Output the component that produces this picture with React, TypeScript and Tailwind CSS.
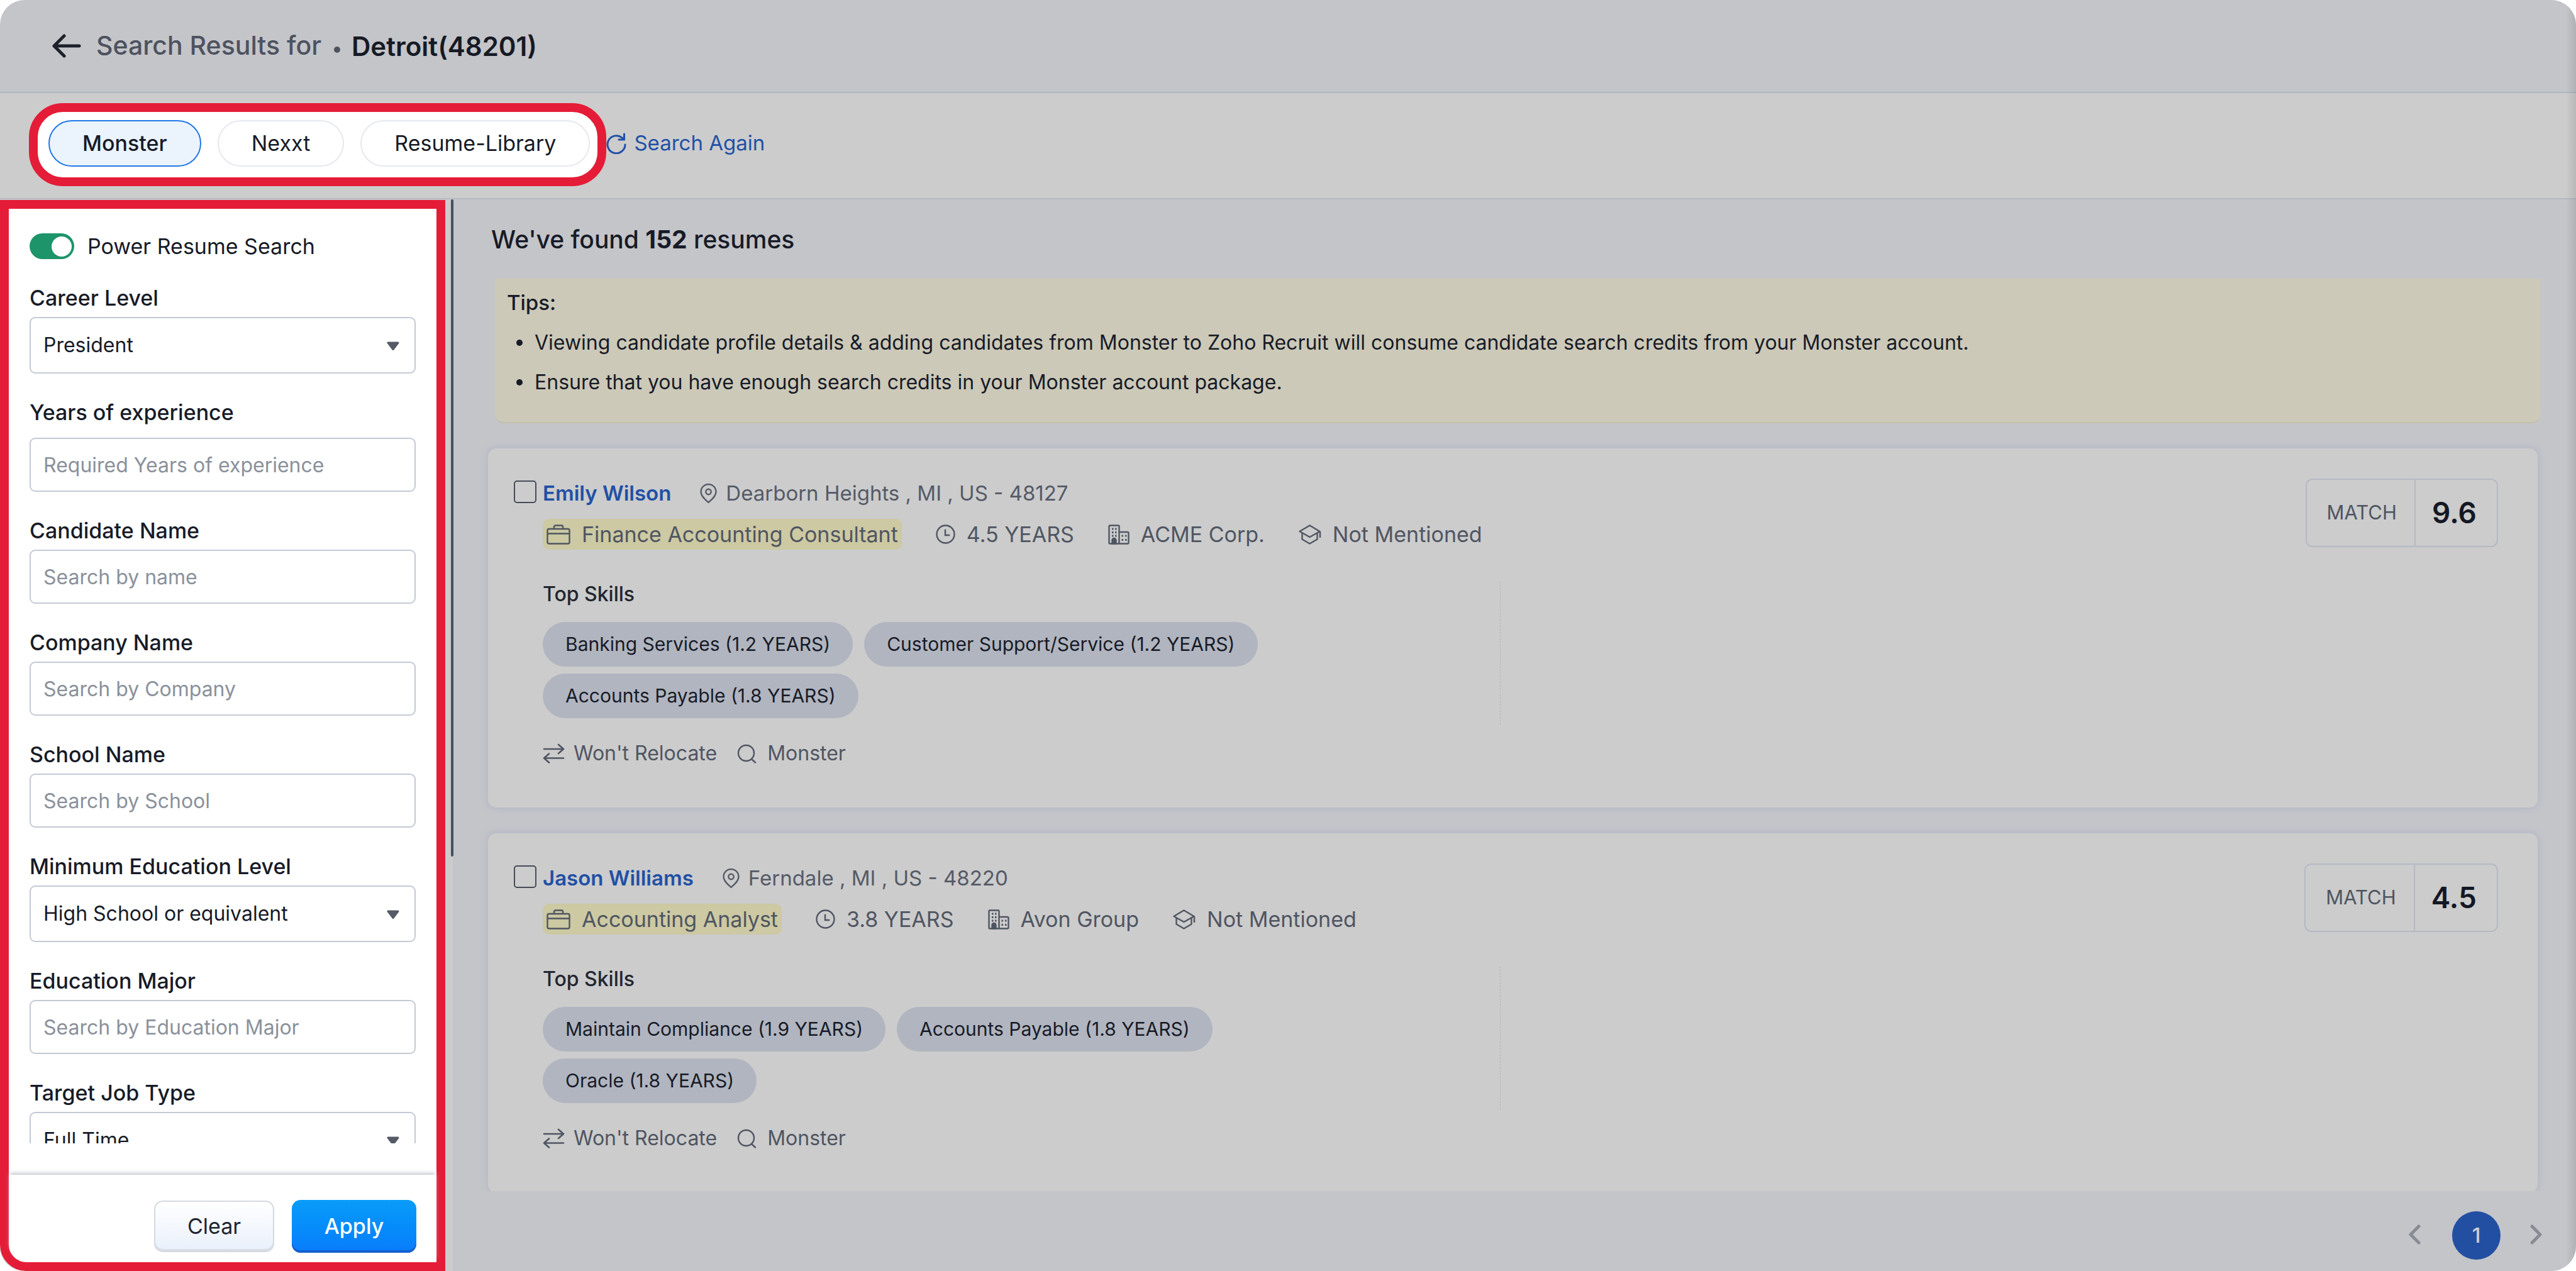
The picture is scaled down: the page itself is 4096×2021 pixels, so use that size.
import type { ReactNode } from "react";

type Candidate = {
  name: string;
  location: string;
  title: string;
  years: string;
  company: string;
  education: string;
  skills: string[];
  score: string;
};

const candidates: Candidate[] = [
  {
    name: "Emily Wilson",
    location: "Dearborn Heights , MI , US - 48127",
    title: "Finance Accounting Consultant",
    years: "4.5 YEARS",
    company: "ACME Corp.",
    education: "Not Mentioned",
    skills: [
      "Banking Services (1.2 YEARS)",
      "Customer Support/Service (1.2 YEARS)",
      "Accounts Payable (1.8 YEARS)",
    ],
    score: "9.6",
  },
  {
    name: "Jason Williams",
    location: "Ferndale , MI , US - 48220",
    title: "Accounting Analyst",
    years: "3.8 YEARS",
    company: "Avon Group",
    education: "Not Mentioned",
    skills: [
      "Maintain Compliance (1.9 YEARS)",
      "Accounts Payable (1.8 YEARS)",
      "Oracle (1.8 YEARS)",
    ],
    score: "4.5",
  },
];

function ArrowBackIcon() {
  return (
    <svg className="h-[38px] w-[46px]" viewBox="0 0 46 38" fill="none" stroke="currentColor" strokeWidth="5" strokeLinecap="round" strokeLinejoin="round">
      <path d="M43 19H3M19 3 3 19l16 16" />
    </svg>
  );
}

function RefreshIcon() {
  return (
    <svg className="h-[34px] w-[32px]" viewBox="0 0 32 34" fill="none" stroke="currentColor" strokeWidth="3" strokeLinecap="round" strokeLinejoin="round">
      <path d="M30 19A14 14 0 1 1 24.5 7.6L28 10.5" />
      <path d="M28.5 2v9H20" />
    </svg>
  );
}

function PinIcon() {
  return (
    <svg className="h-8 w-[27px]" viewBox="0 0 27 32" fill="none" stroke="currentColor" strokeWidth="2.4" strokeLinejoin="round">
      <path d="M13.5 30C9 25.5 1.5 20.5 1.5 13a12 12 0 0 1 24 0c0 7.5-7.5 12.5-12 17Z" />
      <circle cx="13.5" cy="13" r="4.2" />
    </svg>
  );
}

function BriefcaseIcon() {
  return (
    <svg className="h-8 w-[38px]" viewBox="0 0 38 32" fill="none" stroke="currentColor" strokeWidth="2.4" strokeLinejoin="round">
      <rect x="1.5" y="7" width="35" height="23.5" rx="2.5" />
      <path d="M12 7V3.5A2 2 0 0 1 14 1.5h10a2 2 0 0 1 2 2V7M1.5 14.5h35" />
    </svg>
  );
}

function ClockIcon() {
  return (
    <svg className="h-[31px] w-[31px]" viewBox="0 0 31 31" fill="none" stroke="currentColor" strokeWidth="2.4" strokeLinecap="square">
      <circle cx="15.5" cy="15.5" r="14" />
      <path d="M15 9v8h6" />
    </svg>
  );
}

function BuildingIcon() {
  return (
    <svg className="h-8 w-[34px]" viewBox="0 0 34 32" fill="none" stroke="currentColor" strokeWidth="2.4" strokeLinejoin="round">
      <path d="M17.5 30.5H3A1.5 1.5 0 0 1 1.5 29V3A1.5 1.5 0 0 1 3 1.5h13A1.5 1.5 0 0 1 17.5 3v27.5H31a1.5 1.5 0 0 0 1.5-1.5V13.5A1.5 1.5 0 0 0 31 12H17.5" />
      <path d="M6 7h2.5M11 7h2.5M6 12.5h2.5M11 12.5h2.5M6 18h2.5M11 18h2.5M21.5 18h2.5M27 18h2.5M21.5 24.5h2.5M27 24.5h2.5" strokeWidth="3.2" />
      <path d="M6.5 30.5V25a3 3 0 0 1 6 0v5.5Z" fill="currentColor" />
    </svg>
  );
}

function GraduationIcon() {
  return (
    <svg className="h-8 w-[36px]" viewBox="0 0 36 32" fill="none" stroke="currentColor" strokeWidth="2.4" strokeLinejoin="round">
      <path d="M17.5 1.5 33.5 11 17.5 20 1.5 11Z" />
      <path d="M5.5 13.5v10l12 7 12-7v-10M34 11v10" />
    </svg>
  );
}

function SwapIcon() {
  return (
    <svg className="h-8 w-[35px]" viewBox="0 0 35 32" fill="none" stroke="currentColor" strokeWidth="2.6" strokeLinecap="round" strokeLinejoin="round">
      <path d="M2 9h31M25 2l8 7-8 7M33 23.5H2M10 16.5l-8 7 8 7" />
    </svg>
  );
}

function SearchIcon() {
  return (
    <svg className="h-[31px] w-[31px]" viewBox="0 0 31 31" fill="none" stroke="currentColor" strokeWidth="2.4" strokeLinecap="round">
      <circle cx="14.5" cy="14.5" r="12.5" />
      <path d="m23 24 6 5.5" />
    </svg>
  );
}

function SourceTab({ label, active = false }: { label: string; active?: boolean }) {
  return (
    <button
      type="button"
      role="tab"
      aria-selected={active}
      className={
        active
          ? "h-[74px] rounded-full border-2 border-[#1f78e6] bg-[#ebf3fc] px-[52px] text-[34px] font-medium text-[#171b27]"
          : "h-[74px] rounded-full border-2 border-[#e5e8ef] bg-white px-[52px] text-[34px] text-[#171b27]"
      }
    >
      {label}
    </button>
  );
}

function FieldLabel({ id, children }: { id: string; children: ReactNode }) {
  return (
    <label htmlFor={id} className="block text-[34px] leading-[40px] font-medium text-[#171b27]">
      {children}
    </label>
  );
}

function TextField({ id, label, placeholder, gap = "mt-[10px]" }: { id: string; label: string; placeholder: string; gap?: string }) {
  return (
    <div>
      <FieldLabel id={id}>{label}</FieldLabel>
      <input
        id={id}
        type="text"
        placeholder={placeholder}
        className={`${gap} block h-[86px] w-full rounded-[9px] border-2 border-[#c3cad6] bg-white px-5 text-[32px] text-[#171b27] placeholder:text-[#8a919b]`}
      />
    </div>
  );
}

function SelectField({ id, label, value }: { id: string; label: string; value: string }) {
  return (
    <div>
      <FieldLabel id={id}>{label}</FieldLabel>
      <div className="relative mt-[10px]">
        <select
          id={id}
          defaultValue={value}
          className="block h-[90px] w-full appearance-none rounded-[9px] border-2 border-[#c3cad6] bg-white px-5 text-[32px] text-[#171b27]"
        >
          <option>{value}</option>
        </select>
        <svg className="pointer-events-none absolute top-[39px] right-[26px] h-[15px] w-5" viewBox="0 0 20 15" fill="#555a66" stroke="#555a66" strokeWidth="3" strokeLinejoin="round">
          <path d="M2 2h16l-8 10.5Z" />
        </svg>
      </div>
    </div>
  );
}

function CandidateCard({ candidate }: { candidate: Candidate }) {
  const checkId = `select-${candidate.name.replace(" ", "-").toLowerCase()}`;
  return (
    <article className="flex shrink-0 items-start rounded-[13px] bg-[#cccccc] pt-12 pr-[63px] pb-[66px] pl-[41px] shadow-[0_0_10px_3px_#b6bac6]">
      <input
        id={checkId}
        type="checkbox"
        aria-label={`Select ${candidate.name}`}
        className="mt-[3px] size-[36px] shrink-0 appearance-none rounded-[5px] border-2 border-[#454b58]"
      />
      <div className="ml-[10px] min-w-0 flex-1">
        <div className="flex items-start justify-between">
          <div>
            <div className="flex h-12 items-center">
              <a href="#profile" className="text-[33px] font-semibold text-[#2150a6]">
                {candidate.name}
              </a>
              <span className="ml-[46px] flex items-center gap-[14px] text-[33px] text-[#555a67]">
                <PinIcon />
                {candidate.location}
              </span>
            </div>
            <div className="mt-4 flex h-[49px] items-center gap-[54px] text-[34px] text-[#4f5562]">
              <span className="flex h-full items-center gap-[18px] rounded-[10px] bg-[#ccc9a3] px-[6px]">
                <BriefcaseIcon />
                {candidate.title}
              </span>
              <span className="flex items-center gap-[18px]">
                <ClockIcon />
                {candidate.years}
              </span>
              <span className="flex items-center gap-[18px]">
                <BuildingIcon />
                {candidate.company}
              </span>
              <span className="flex items-center gap-[18px]">
                <GraduationIcon />
                {candidate.education}
              </span>
            </div>
          </div>
          <div className="flex h-[109px] items-stretch rounded-[11px] border-2 border-[#b5b9c5]">
            <span className="flex items-center pr-7 pl-8 text-[31px] text-[#4f5562]">MATCH</span>
            <span className="flex items-center border-l-2 border-[#b5b9c5] pr-8 pl-[26px] text-[46px] font-semibold text-[#141824]">
              {candidate.score}
            </span>
          </div>
        </div>

        <div className="mt-[51px] w-[49%] border-r border-dashed border-[#b3b5ba] pr-[120px] pb-[10px]">
          <h3 className="text-[32px] leading-[40px] font-medium text-[#21252f]">Top Skills</h3>
          <ul className="mt-6 flex flex-wrap gap-x-[18px] gap-y-[11px]">
            {candidate.skills.map((skill) => (
              <li key={skill} className="flex h-[71px] items-center rounded-full bg-[#b1b5c0] px-9 text-[30px] text-[#171b27]">
                {skill}
              </li>
            ))}
          </ul>
        </div>

        <div className="mt-[26px] flex h-10 items-center text-[32px] text-[#4f5562]">
          <SwapIcon />
          <span className="ml-[14px]">Won't Relocate</span>
          <span className="ml-[32px] flex items-center gap-[17px]">
            <SearchIcon />
            Monster
          </span>
        </div>
      </div>
    </article>
  );
}

export default function App() {
  return (
    <div className="h-screen bg-white font-['Inter',sans-serif]">
      <div className="relative flex h-full flex-col overflow-hidden rounded-[39px] bg-[#c4c5c9]">
        <header className="flex h-[148px] shrink-0 items-center border-b-2 border-[#b2b6c2] pl-[83px]">
          <button type="button" aria-label="Back" className="text-[#1c202b]">
            <ArrowBackIcon />
          </button>
          <h1 className="ml-6 flex items-center text-[41px] font-medium text-[#4d525f]">
            Search Results for
            <span className="mt-3 ml-5 size-[10px] rounded-full bg-[#4d525f]" />
            <span className="ml-[18px] text-[42px] font-semibold text-[#161a25]">Detroit(48201)</span>
          </h1>
        </header>

        <div className="flex h-[169px] shrink-0 items-center border-b-2 border-[#b5b9c4] bg-[#cccccc] pb-1 pl-[46px]">
          <div role="tablist" aria-label="Sources" className="flex h-[132px] items-center gap-[26px] rounded-[54px] border-[14px] border-[#e51c37] bg-white pr-3 pb-1 pl-[17px]">
            <SourceTab label="Monster" active />
            <SourceTab label="Nexxt" />
            <SourceTab label="Resume-Library" />
          </div>
          <button type="button" className="flex items-center gap-3 pb-1 text-[33px] text-[#2150a6]">
            <RefreshIcon />
            Search Again
          </button>
        </div>

        <div className="flex min-h-0 flex-1">
          <div className="flex w-[721px] shrink-0 justify-between bg-[#cbcbcc]">
            <aside className="mt-px flex w-[708px] flex-col rounded-bl-[42px] border-[14px] border-[#e51c37] bg-white">
              <div className="min-h-0 flex-1 overflow-hidden pt-[39px] pr-[33px] pl-[33px]">
                <label className="flex h-[41px] items-center gap-[21px] text-[34px] text-[#171b27]">
                  <input type="checkbox" role="switch" defaultChecked className="peer sr-only" />
                  <span className="flex h-[41px] w-[71px] items-center justify-end rounded-full bg-[#1d946a] pr-1">
                    <span className="size-8 rounded-full bg-white" />
                  </span>
                  Power Resume Search
                </label>
                <div className="mt-[42px] flex flex-col gap-[42px]">
                  <SelectField id="career-level" label="Career Level" value="President" />
                  <TextField id="experience" label="Years of experience" placeholder="Required Years of experience" gap="mt-5" />
                  <TextField id="candidate-name" label="Candidate Name" placeholder="Search by name" />
                  <TextField id="company-name" label="Company Name" placeholder="Search by Company" />
                  <TextField id="school-name" label="School Name" placeholder="Search by School" />
                  <SelectField id="education-level" label="Minimum Education Level" value="High School or equivalent" />
                  <TextField id="education-major" label="Education Major" placeholder="Search by Education Major" />
                  <SelectField id="job-type" label="Target Job Type" value="Full Time" />
                </div>
              </div>
              <div className="mt-[50px] flex h-[139px] shrink-0 items-center justify-end gap-7 rounded-bl-[28px] pt-6 pr-8 shadow-[0_-4px_7px_-2px_#b9bec8]">
                <button
                  type="button"
                  className="h-[82px] w-[191px] rounded-[14px] border-2 border-[#d5d9e0] bg-linear-to-b from-white to-[#e9f0fa] text-[34px] text-[#21252f] shadow-[inset_0_-3px_0_#d8dde6]"
                >
                  Clear
                </button>
                <button
                  type="button"
                  className="h-[84px] w-[198px] rounded-[14px] bg-linear-to-b from-[#0a9cf9] to-[#0a7cfb] text-[34px] font-medium text-white shadow-[inset_0_-4px_0_#1460cf]"
                >
                  Apply
                </button>
              </div>
            </aside>
            <div className="h-[1045px] w-1 rounded-full bg-[#494f5c]" />
          </div>

          <main className="flex min-w-0 flex-1 flex-col border-l border-[#bcbec8]">
            <div className="min-h-0 flex-1 overflow-hidden pt-10 pr-[61px] pl-[54px]">
              <h2 className="ml-[5px] text-[39px] leading-[48px] font-medium text-[#171b27]">
                We've found <b className="font-bold">152</b> resumes
              </h2>
              <section className="mt-[38px] -mr-[5px] ml-[11px] rounded-t-[3px] rounded-b-[14px] border-b-2 border-[#c2bfab] bg-[#ccc9b8] pt-[18px] pb-8 pl-[19px] text-[32px] text-[#171b27]">
                <h3 className="text-[33px] leading-[40px] font-medium">Tips:</h3>
                <ul className="mt-3">
                  <li className="flex h-[63px] items-center gap-[19px] pl-[15px]">
                    <span className="size-[10px] rounded-full bg-[#171b27]" />
                    Viewing candidate profile details &amp; adding candidates from Monster to Zoho Recruit will consume candidate search credits from your Monster account.
                  </li>
                  <li className="flex h-[63px] items-center gap-[19px] pl-[15px]">
                    <span className="size-[10px] rounded-full bg-[#171b27]" />
                    Ensure that you have enough search credits in your Monster account package.
                  </li>
                </ul>
              </section>
              <div className="mt-10 flex flex-col gap-[41px]">
                {candidates.map((candidate) => (
                  <CandidateCard key={candidate.name} candidate={candidate} />
                ))}
              </div>
            </div>
            <nav aria-label="Pagination" className="flex h-[127px] shrink-0 items-center justify-end pt-[14px] pr-[54px] text-[#868b94]">
              <button type="button" aria-label="Previous page" className="-mt-1">
                <svg className="h-[32px] w-[19px]" viewBox="0 0 19 32" fill="none" stroke="currentColor" strokeWidth="5" strokeLinecap="round" strokeLinejoin="round">
                  <path d="M16 3 3 16l13 13" />
                </svg>
              </button>
              <button type="button" aria-current="page" className="ml-[50px] size-[77px] rounded-full bg-[#234fa2] text-[33px] font-medium text-[#ccd0d8]">
                1
              </button>
              <button type="button" aria-label="Next page" className="-mt-1 ml-[47px]">
                <svg className="h-[32px] w-[19px]" viewBox="0 0 19 32" fill="none" stroke="currentColor" strokeWidth="5" strokeLinecap="round" strokeLinejoin="round">
                  <path d="m3 3 13 13L3 29" />
                </svg>
              </button>
            </nav>
          </main>
        </div>
        <div className="pointer-events-none absolute inset-y-0 right-0 w-4 bg-linear-to-l from-black/10 to-transparent" />
      </div>
    </div>
  );
}
